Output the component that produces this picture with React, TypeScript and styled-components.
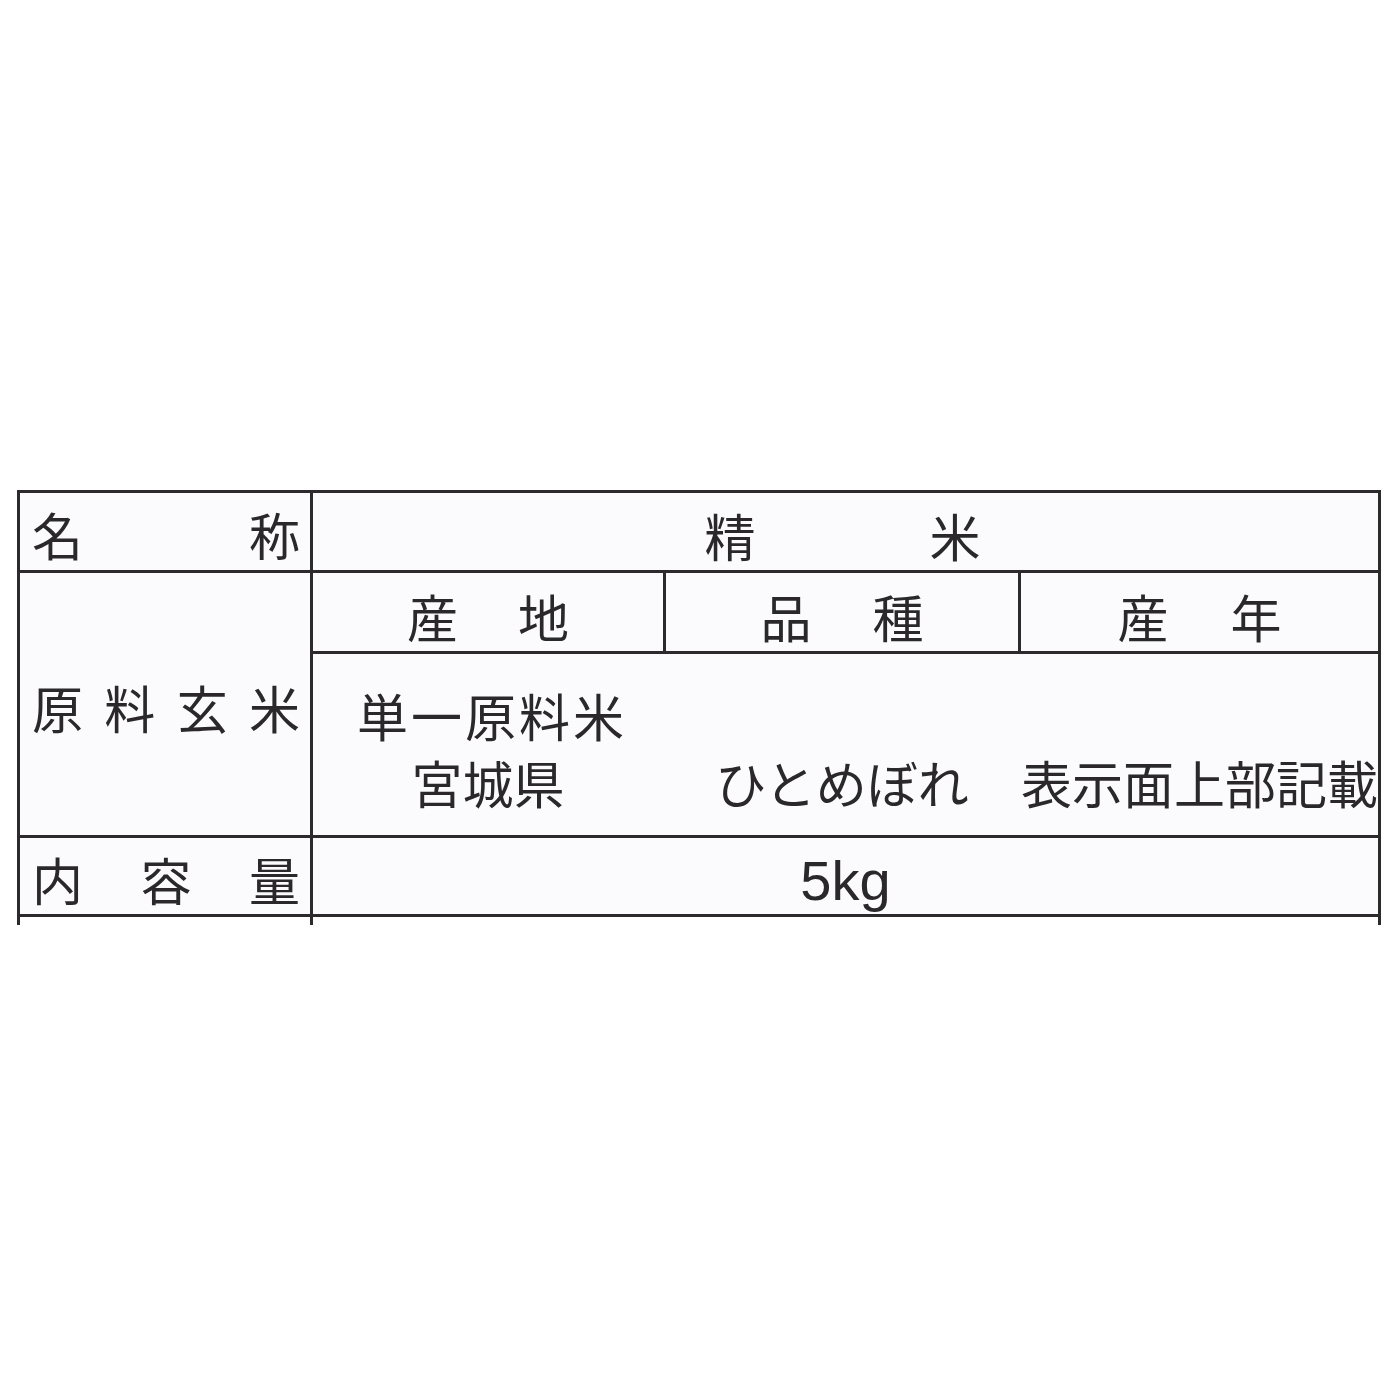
import styled, { createGlobalStyle } from "styled-components";

const GlobalStyle = createGlobalStyle`
  html, body {
    margin: 0;
    padding: 0;
    background: #ffffff;
  }
  body {
    font-family: "Noto Sans CJK JP", "Noto Sans", sans-serif;
    color: #2a282b;
  }
`;

const LINE = "#2c2a2d";
const PAPER = "#fbfbfd";

const Page = styled.div`
  width: 1400px;
  height: 1400px;
  padding: 490px 0 0 17px;
  box-sizing: border-box;
  background: #ffffff;
`;

const Label = styled.div`
  width: 1364px;
  display: grid;
  grid-template-columns: 290px minmax(0, 1fr);
  grid-template-rows: 77px 262px 76px 8px;
  gap: 3px;
  padding: 3px 3px 0 3px;
  box-sizing: border-box;
  background: ${LINE};
`;

const Cell = styled.div<{ $center?: boolean }>`
  background: ${PAPER};
  display: flex;
  align-items: center;
  justify-content: ${(p) => (p.$center ? "center" : "flex-start")};
  box-sizing: border-box;
  min-width: 0;
`;

const HeadCell = styled(Cell)`
  font-size: 51px;
  line-height: 1;
  justify-content: space-between;
  padding: 6px 10px 0 12px;
`;

const SpacedText = styled.div<{ $gap: number; $shift?: number }>`
  display: flex;
  gap: ${(p) => p.$gap}px;
  font-size: 51px;
  line-height: 1;
  padding-top: 8px;
  margin-left: ${(p) => p.$shift ?? 0}px;
`;

const Origin = styled.div`
  display: grid;
  grid-template-rows: 78px minmax(0, 1fr);
  gap: 3px;
  background: ${LINE};
  min-width: 0;
`;

const SubRow = styled.div`
  display: grid;
  grid-template-columns: 350px 352px minmax(0, 1fr);
  gap: 3px;
`;

const Detail = styled.div`
  background: ${PAPER};
  padding-top: 36px;
  font-size: 51px;
  line-height: 1;
  display: flex;
  flex-direction: column;
  gap: 16px;
`;

const DetailLine = styled.div`
  display: grid;
  grid-template-columns: 350px 352px minmax(0, 1fr);
  column-gap: 3px;
`;

const First = styled.div`
  padding-left: 44px;
  letter-spacing: 3px;
`;

const Centered = styled.div`
  text-align: center;
  white-space: nowrap;
`;

const Amount = styled.div`
  font-family: "Liberation Sans", Arial, sans-serif;
  font-size: 56px;
  line-height: 1;
  padding-top: 10px;
`;

const Stub = styled.div`
  background: #ffffff;
`;

export default function App() {
  return (
    <>
      <GlobalStyle />
      <Page>
        <Label>
          <HeadCell>
            <span>名</span>
            <span>称</span>
          </HeadCell>
          <Cell $center>
            <SpacedText $gap={174} $shift={-6}>
              <span>精</span>
              <span>米</span>
            </SpacedText>
          </Cell>

          <HeadCell>
            <span>原</span>
            <span>料</span>
            <span>玄</span>
            <span>米</span>
          </HeadCell>
          <Origin>
            <SubRow>
              <Cell $center>
                <SpacedText $gap={60}>
                  <span>産</span>
                  <span>地</span>
                </SpacedText>
              </Cell>
              <Cell $center>
                <SpacedText $gap={61}>
                  <span>品</span>
                  <span>種</span>
                </SpacedText>
              </Cell>
              <Cell $center>
                <SpacedText $gap={62}>
                  <span>産</span>
                  <span>年</span>
                </SpacedText>
              </Cell>
            </SubRow>
            <Detail>
              <First>単一原料米</First>
              <DetailLine>
                <Centered>宮城県</Centered>
                <Centered>ひとめぼれ</Centered>
                <Centered>表示面上部記載</Centered>
              </DetailLine>
            </Detail>
          </Origin>

          <HeadCell>
            <span>内</span>
            <span>容</span>
            <span>量</span>
          </HeadCell>
          <Cell $center>
            <Amount>5kg</Amount>
          </Cell>

          <Stub />
          <Stub />
        </Label>
      </Page>
    </>
  );
}
